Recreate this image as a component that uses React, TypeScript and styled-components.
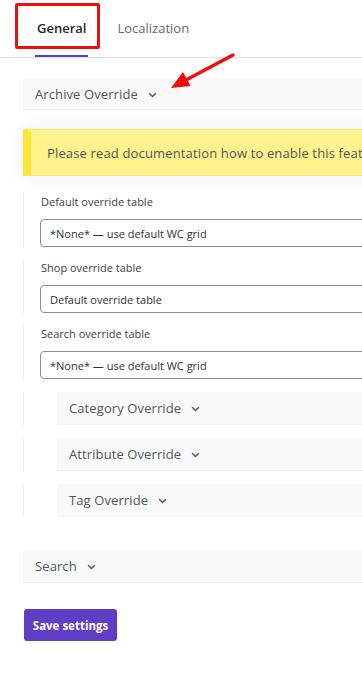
import React from "react";
import styled, { createGlobalStyle } from "styled-components";

const Global = createGlobalStyle`
  html, body { margin: 0; padding: 0; background: #fff; overflow: hidden; }
  body { font-family: "Open Sans", "Liberation Sans", sans-serif; color: #3c434a; }
  * { box-sizing: border-box; }
`;

const Page = styled.div`
  position: relative;
  width: 362px;
  height: 675px;
  overflow: hidden;
`;

const TabBar = styled.div`
  display: flex;
  gap: 27px;
  height: 58px;
  padding-left: 35px;
  border-bottom: 1px solid #e3e3e3;
  width: 700px;
`;

const Tab = styled.div<{ $active?: boolean }>`
  height: 57px;
  display: flex;
  align-items: center;
  padding: 0 2px;
  font-size: 13px;
  font-weight: ${(p) => (p.$active ? 600 : 500)};
  color: ${(p) => (p.$active ? "#23282d" : "#646970")};
  border-bottom: 2px solid ${(p) => (p.$active ? "#5e3dc6" : "transparent")};
`;

const Content = styled.div`
  width: 640px;
  padding-left: 23px;
  display: flex;
  flex-direction: column;
`;

const AccordionHead = styled.div<{ $h?: number; $mt?: number }>`
  height: ${(p) => p.$h ?? 33}px;
  margin-top: ${(p) => p.$mt ?? 0}px;
  background: #f9f9f9;
  border-bottom: 1px solid #f1f1f1;
  display: flex;
  align-items: center;
  padding-left: 12px;
  gap: 10px;
  font-size: 13px;
  color: #50575e;
  letter-spacing: 0.1px;
  white-space: nowrap;
`;

const Banner = styled.div`
  margin-top: 19px;
  height: 47px;
  background: #fff18c;
  border-left: 8px solid #ffe536;
  border-top: 1px solid #f6e47c;
  border-bottom: 1px solid #f6e47c;
  box-shadow: 0 0 22px rgba(0, 0, 0, 0.07);
  display: flex;
  align-items: center;
  padding-left: 16px;
  font-size: 13px;
  letter-spacing: 0.15px;
  color: #50575e;
  white-space: nowrap;
`;

const Fields = styled.div`
  margin-top: 17px;
  display: flex;
  flex-direction: column;
  gap: 12px;
`;

const Field = styled.div`
  border-left: 1px solid #f0f0f0;
  padding-left: 16px;
  display: flex;
  flex-direction: column;
`;

const Label = styled.div`
  font-size: 11px;
  line-height: 18px;
  padding-left: 1px;
  color: #3c434a;
  margin-bottom: 8px;
  white-space: nowrap;
`;

const Select = styled.select`
  appearance: none;
  -webkit-appearance: none;
  height: 28px;
  width: 560px;
  border: 1px solid #8c8f94;
  border-radius: 4px;
  background: #fff;
  padding: 0 9px;
  font-family: "Open Sans", "Liberation Sans", sans-serif;
  font-size: 11px;
  color: #2c3338;
  outline: none;
`;

const SubList = styled.div`
  margin-top: 13px;
  display: flex;
  flex-direction: column;
  gap: 13px;
`;

const SubRow = styled.div`
  border-left: 1px solid #f0f0f0;
  padding-left: 33px;
`;

const SaveButton = styled.button`
  margin-top: 26px;
  margin-left: 1px;
  align-self: flex-start;
  width: 93px;
  height: 32px;
  border: none;
  border-radius: 3px;
  background: #5f3dc4;
  color: #fff;
  font-family: "Open Sans", "Liberation Sans", sans-serif;
  font-weight: 700;
  font-size: 11.5px;
  padding: 0;
`;

const Highlight = styled.div`
  position: absolute;
  left: 15px;
  top: 3px;
  width: 85px;
  height: 46px;
  border: 3px solid #f20d0d;
  border-radius: 2px;
`;

const ArrowSvg = styled.svg`
  position: absolute;
  left: 0;
  top: 0;
  pointer-events: none;
`;

const Chevron = () => (
  <svg width="9" height="6" viewBox="0 0 9 6" style={{ marginTop: 1 }}>
    <path d="M1.2 1.2 L4.5 4.5 L7.8 1.2" fill="none" stroke="#50575e" strokeWidth="1.5" />
  </svg>
);

export default function App() {
  return (
    <>
      <Global />
      <Page>
        <TabBar>
          <Tab $active>General</Tab>
          <Tab>Localization</Tab>
        </TabBar>
        <Content>
          <AccordionHead $h={31} $mt={21}>
            Archive Override <Chevron />
          </AccordionHead>
          <Banner>Please read documentation how to enable this feature.</Banner>
          <Fields>
            <Field>
              <Label>Default override table</Label>
              <Select defaultValue="none">
                <option value="none">*None* — use default WC grid</option>
              </Select>
            </Field>
            <Field>
              <Label>Shop override table</Label>
              <Select defaultValue="default">
                <option value="default">Default override table</option>
              </Select>
            </Field>
            <Field>
              <Label>Search override table</Label>
              <Select defaultValue="none">
                <option value="none">*None* — use default WC grid</option>
              </Select>
            </Field>
          </Fields>
          <SubList>
            <SubRow>
              <AccordionHead>
                Category Override <Chevron />
              </AccordionHead>
            </SubRow>
            <SubRow>
              <AccordionHead>
                Attribute Override <Chevron />
              </AccordionHead>
            </SubRow>
            <SubRow>
              <AccordionHead>
                Tag Override <Chevron />
              </AccordionHead>
            </SubRow>
          </SubList>
          <AccordionHead $mt={33}>
            Search <Chevron />
          </AccordionHead>
          <SaveButton>Save settings</SaveButton>
        </Content>
        <Highlight />
        <ArrowSvg width="362" height="120" viewBox="0 0 362 120">
          <line x1="233" y1="55" x2="186" y2="80" stroke="#f20d0d" strokeWidth="3.5" strokeLinecap="round" />
          <polygon points="171,88 190.5,86 183,72" fill="#f20d0d" />
        </ArrowSvg>
      </Page>
    </>
  );
}
